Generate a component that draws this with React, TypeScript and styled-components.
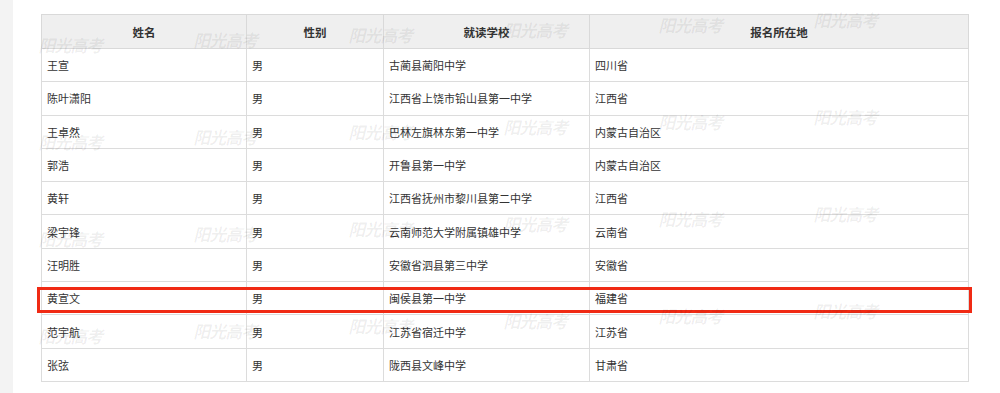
import React, { FC } from 'react';
import styled, { createGlobalStyle } from 'styled-components';

const GlobalStyle = createGlobalStyle`
  html, body {
    margin: 0;
    padding: 0;
    background: #ffffff;
  }
  body {
    font-family: "Noto Sans CJK SC", "Liberation Sans", sans-serif;
  }
`;

const Page = styled.div`
  position: relative;
  display: flex;
  width: 1000px;
  height: 393px;
  overflow: hidden;
  background: #ffffff;
`;

const SideStrip = styled.div`
  width: 13px;
  flex-shrink: 0;
  background: #f3f3f3;
`;

const Content = styled.div`
  padding: 14px 0 0 28px;
`;

const TableWrap = styled.div`
  position: relative;
  width: 927px;
`;

const Table = styled.table`
  width: 927px;
  border-collapse: collapse;
  table-layout: fixed;
  font-size: 11px;
  color: #333333;
`;

const Th = styled.th<{ $w: number }>`
  width: ${(p) => p.$w}px;
  height: 33px;
  padding: 0;
  background: #efefef;
  border: 1px solid #d9d9d9;
  font-size: 11.5px;
  font-weight: 700;
  color: #333333;
  text-align: center;
`;

const Td = styled.td`
  height: 32.3px;
  padding: 0 0 0 5px;
  border: 1px solid #dcdcdc;
  text-align: left;
  white-space: nowrap;
`;

const Highlight = styled.div`
  position: absolute;
  left: -4px;
  top: 273px;
  width: 929px;
  height: 20px;
  border: 3px solid #f02a14;
  pointer-events: none;
`;

const MarkLayer = styled.div`
  position: absolute;
  inset: 0;
  pointer-events: none;
`;

const Mark = styled.span`
  position: absolute;
  font-family: "Noto Sans CJK SC", serif;
  font-size: 17px;
  font-weight: 700;
  letter-spacing: -1px;
  color: rgba(0, 0, 0, 0.065);
  transform: skewX(-14deg);
  white-space: nowrap;
`;

const columns = [
  { title: '姓名', w: 204 },
  { title: '性别', w: 136 },
  { title: '就读学校', w: 205 },
  { title: '报名所在地', w: 378 },
];

const rows = [
  ['王宣', '男', '古蔺县蔺阳中学', '四川省'],
  ['陈叶潇阳', '男', '江西省上饶市铅山县第一中学', '江西省'],
  ['王卓然', '男', '巴林左旗林东第一中学', '内蒙古自治区'],
  ['郭浩', '男', '开鲁县第一中学', '内蒙古自治区'],
  ['黄轩', '男', '江西省抚州市黎川县第二中学', '江西省'],
  ['梁宇锋', '男', '云南师范大学附属镇雄中学', '云南省'],
  ['汪明胜', '男', '安徽省泗县第三中学', '安徽省'],
  ['黄宣文', '男', '闽侯县第一中学', '福建省'],
  ['范宇航', '男', '江苏省宿迁中学', '江苏省'],
  ['张弦', '男', '陇西县文峰中学', '甘肃省'],
];

// faint site watermark, tiled slightly uphill to the right
const marks: { x: number; y: number }[] = [];
for (let r = 0; r < 4; r++) {
  for (let c = 0; c < 6; c++) {
    marks.push({ x: 40 + 155 * c, y: 32 + 97 * r - 5 * c });
  }
}

const App: FC = () => (
  <>
    <GlobalStyle />
    <Page>
      <SideStrip />
      <Content>
        <TableWrap>
          <Table>
            <thead>
              <tr>
                {columns.map((col) => (
                  <Th key={col.title} $w={col.w}>
                    {col.title}
                  </Th>
                ))}
              </tr>
            </thead>
            <tbody>
              {rows.map((row) => (
                <tr key={row[0]}>
                  {row.map((cell, i) => (
                    <Td key={i}>{cell}</Td>
                  ))}
                </tr>
              ))}
            </tbody>
          </Table>
          <Highlight />
        </TableWrap>
      </Content>
      <MarkLayer>
        {marks.map((m, i) => (
          <Mark key={i} style={{ left: m.x, top: m.y }}>
            阳光高考
          </Mark>
        ))}
      </MarkLayer>
    </Page>
  </>
);

export default App;
